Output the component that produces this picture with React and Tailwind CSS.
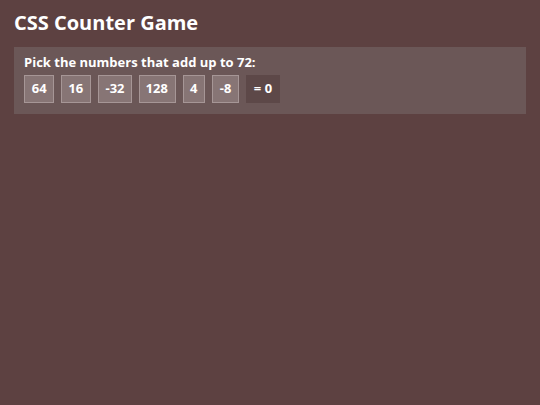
export default function App() {
  const nums = [64, 16, -32, 128, 4, -8];
  return (
    <div className="min-h-[405px] w-[540px] bg-[#5d4141] text-white px-[14px] pt-[10px]" style={{ fontFamily: '"Open Sans", "Noto Sans", sans-serif' }}>
      <h1 className="text-[20px] font-bold leading-[26px] m-0">CSS Counter Game</h1>
      <div className="mt-[11px] bg-[#6b5757] px-[10px] pt-[5px] pb-[11px]">
        <div className="text-[13px] font-bold leading-[20px]">Pick the numbers that add up to 72:</div>
        <div className="flex gap-[7px] mt-[3px] proportional-nums">
          {nums.map((n) => (
            <div key={n} className="border border-[#a69696] bg-[#877575] px-[6.5px] h-[28px] flex items-center text-[13px] font-bold">
              {n}
            </div>
          ))}
          <div className="bg-[#5d4848] px-[7.5px] h-[28px] flex items-center text-[13px] font-bold">= 0</div>
        </div>
      </div>
    </div>
  );
}
